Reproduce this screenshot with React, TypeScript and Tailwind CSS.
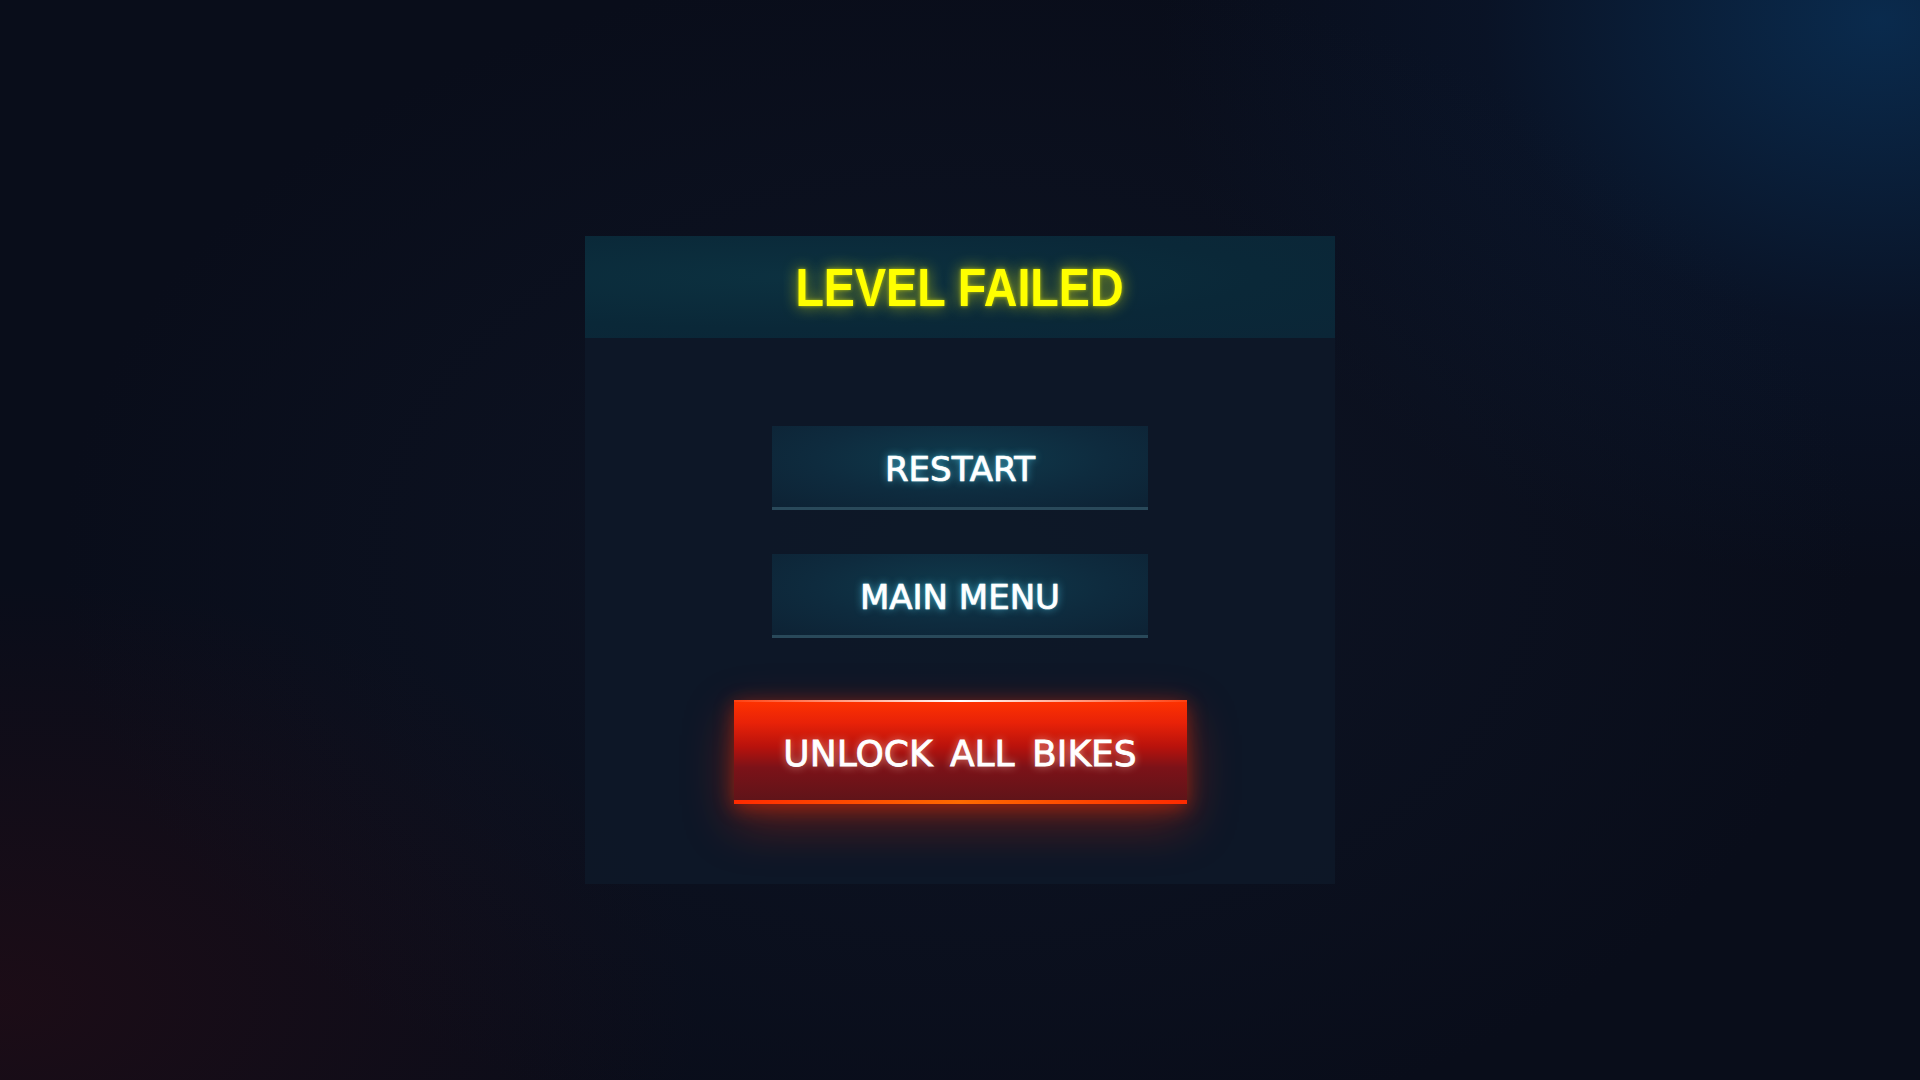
export default function App() {
  return (
    <div className="relative flex h-[1080px] w-full flex-col items-center overflow-hidden bg-[#090d1a] pt-[236px] font-['Liberation_Sans',sans-serif]">
      {/* background lights */}
      <div className="pointer-events-none absolute inset-0 bg-[radial-gradient(ellipse_720px_560px_at_1880px_20px,rgba(10,50,90,0.8),rgba(10,30,60,0.35)_55%,transparent_100%)]" />
      <div className="pointer-events-none absolute inset-0 bg-[radial-gradient(ellipse_700px_420px_at_0px_1000px,rgba(40,12,20,0.6),transparent_100%)]" />
      <div className="pointer-events-none absolute inset-0 bg-[radial-gradient(ellipse_900px_600px_at_960px_560px,rgba(20,30,50,0.45),transparent_100%)]" />

      <div className="relative flex w-[750px] flex-col bg-[#0d1828]/90 pb-[80px]">
        <div className="flex h-[102px] items-center justify-center bg-[radial-gradient(ellipse_at_30%_40%,#0c3140,#0a2838_60%,#0b2637)]">
          <span className="inline-block scale-x-88 text-[53px] font-bold leading-none text-[#ffff00] [text-shadow:0_0_16px_rgba(255,255,0,0.6),0_0_4px_rgba(255,255,0,0.6)]">
            LEVEL FAILED
          </span>
        </div>

        <div className="flex flex-col items-center pt-[88px]">
          <MenuButton label="RESTART" />
          <div className="h-[44px]" />
          <MenuButton label="MAIN MENU" />

          <div className="relative mt-[62px] flex h-[104px] w-[453px] items-center justify-center bg-[linear-gradient(180deg,#ff3300_0%,#e82208_22%,#b8120c_45%,#7c1218_65%,#5c1419_100%)] shadow-[0_18px_50px_rgba(255,40,0,0.35),0_4px_18px_rgba(255,50,0,0.45)]">
            <div className="absolute left-0 right-0 top-0 h-[2px] bg-[linear-gradient(90deg,rgba(255,120,80,0.2),#ffffff_50%,rgba(255,120,80,0.2))]" />
            <div className="absolute bottom-0 left-0 right-0 h-[4px] bg-[linear-gradient(90deg,#ff2a00,#ff6a00_50%,#ff2a00)]" />
            <span className="mt-[4px] font-['DejaVu_Sans',sans-serif] text-[36px] leading-none text-white [-webkit-text-stroke:0.8px_white] [text-shadow:0_0_8px_rgba(255,220,200,0.7)] [word-spacing:6px]">
              UNLOCK ALL BIKES
            </span>
          </div>
        </div>
      </div>
    </div>
  );
}

function MenuButton({ label }: { label: string }) {
  return (
    <div className="relative flex h-[84px] w-[376px] items-center justify-center border-b-[3px] border-[#29495a] bg-[radial-gradient(ellipse_at_50%_40%,#0f3a4c,#0e2b3e_55%,#0d2234)]">
      <span className="mt-[5px] font-['DejaVu_Sans',sans-serif] text-[34px] leading-none text-white [-webkit-text-stroke:0.7px_white] [text-shadow:0_0_8px_rgba(90,220,255,0.75),0_0_2px_rgba(150,240,255,0.8)]">
        {label}
      </span>
    </div>
  );
}
